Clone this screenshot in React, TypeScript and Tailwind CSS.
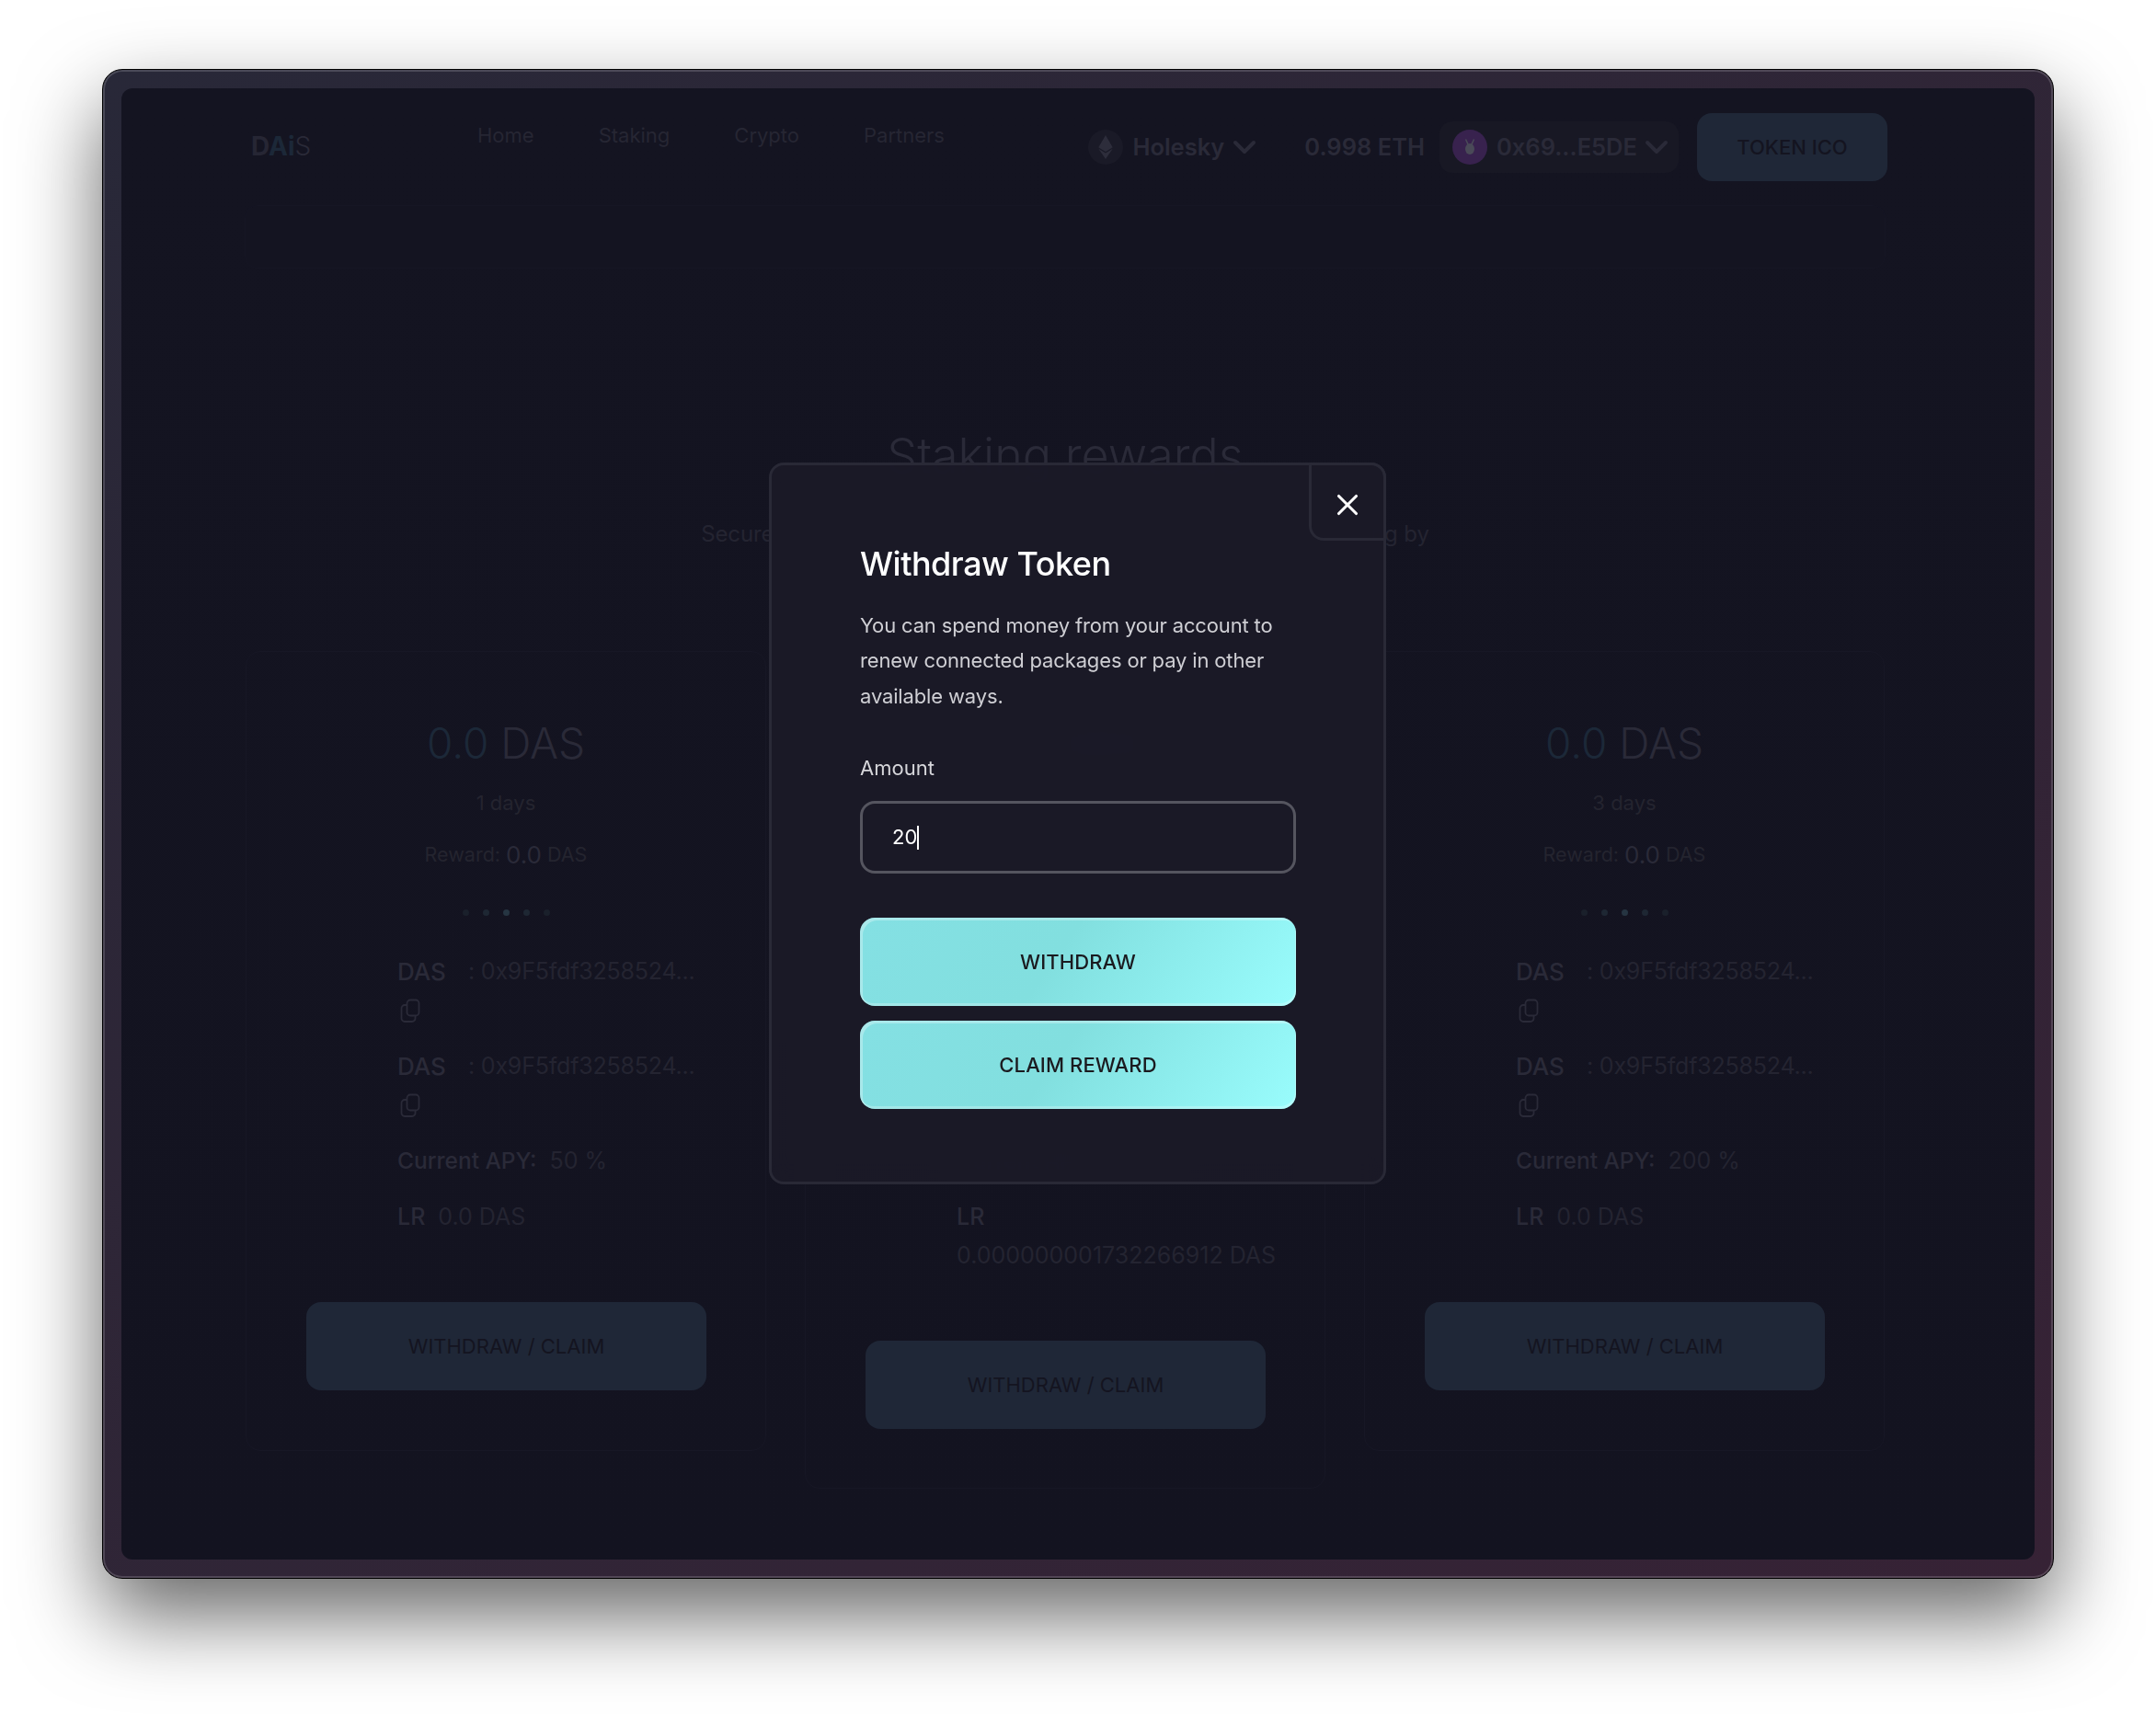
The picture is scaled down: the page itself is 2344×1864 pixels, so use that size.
import { ChevronDown, X } from 'lucide-react';
import { FaEthereum } from 'react-icons/fa';

const cards = [
  { days: '1 days', apy: '50 %', lr: '0.0 DAS', active: 2 },
  { days: '2 days', apy: '100 %', lr: '0.000000001732266912 DAS', active: 2 },
  { days: '3 days', apy: '200 %', lr: '0.0 DAS', active: 2 },
];

function CopyIcon() {
  return (
    <svg viewBox="0 0 24 26" className="mt-[11px] ml-[2px] h-[26px] w-[24px] text-[#2a2a38]" fill="none" stroke="currentColor" strokeWidth="1.8">
      <rect x="8.500" y="1.500" width="13" height="17" rx="3.500" />
      <path d="M8.500 7H6a3.500 3.500 0 0 0-3.500 3.500v11A3.500 3.500 0 0 0 6 25h8a3.500 3.500 0 0 0 3.500-3.500v-3" />
    </svg>
  );
}

function AddressRow() {
  return (
    <div className="h-[103px]">
      <div className="flex h-[37px] items-center text-[25px] tracking-[-0.2px] text-[#242431]">
        <span className="w-[77px] text-[26px] font-medium tracking-normal text-[#2a2a38]">DAS</span>
        <span className="whitespace-nowrap">: 0x9F5fdf3258524...</span>
      </div>
      <CopyIcon />
    </div>
  );
}

function StakeCard({ days, apy, lr, active, tall }: { days: string; apy: string; lr: string; active: number; tall?: boolean }) {
  return (
    <div className={`w-[566px] rounded-[16px] border border-[#171725] px-[65px] pt-[76px] ${tall ? 'h-[911px]' : 'h-[870px]'}`}>
      <div className="text-center text-[46px] leading-[46px] font-light">
        <span className="text-[#1c2838]">0.0</span> <span className="text-[#2a2a38]">DAS</span>
      </div>
      <div className="mt-[27px] text-center text-[22px] leading-[30px] text-[#24242f]">{days}</div>
      <div className="mt-[26px] flex h-[30px] items-center justify-center gap-[6px] text-[21.500px] text-[#24242f]">
        <span>Reward:</span>
        <span className="text-[26px] text-[#2a2a38]">0.0</span>
        <span>DAS</span>
      </div>
      <div className="mt-[44px] flex h-[8px] items-center justify-center gap-[15px]">
        {[0, 1, 2, 3, 4].map((i) => (
          <span
            key={i}
            className={`h-[7px] w-[7px] rounded-full ${i === active ? 'bg-[#263542]' : i === 1 || i === 3 ? 'bg-[#1e2733]' : 'bg-[#1a202b]'}`}
          />
        ))}
      </div>
      <div className="mt-[42px] -mr-[30px] pl-[99px]">
        <AddressRow />
        <AddressRow />
        <div className="flex h-[37px] items-center gap-[14px] text-[25px] text-[#242431]">
          <span className="text-[24.500px] font-medium text-[#2a2a38]">Current APY:</span>
          <span>{apy}</span>
        </div>
        <div className="mt-[24px] flex flex-wrap items-center gap-x-[14px] gap-y-[5px] text-[25px] leading-[37px] text-[#242431]">
          <span className="font-medium text-[#2a2a38]">LR</span>
          <span>{lr}</span>
        </div>
      </div>
      <button className="mt-[74px] h-[96px] w-[435px] rounded-[16px] bg-[#1f2737] text-[22px] text-[#141420]">
        WITHDRAW / CLAIM
      </button>
    </div>
  );
}

function TealButton({ label }: { label: string }) {
  return (
    <button className="h-[96px] w-[474px] rounded-[16px] bg-[linear-gradient(125deg,#84e0e3_0%,#82dfdf_45%,#9bffff_105%)] text-[22px] font-medium tracking-[0.1px] text-[#1a1a1f] shadow-[inset_3px_3px_0_rgba(255,255,255,0.3),inset_-1px_-3px_0_rgba(255,255,255,0.25)]">
      {label}
    </button>
  );
}

export default function App() {
  return (
    <div className="h-[1864px] w-[2344px] overflow-hidden bg-white pt-[75px] pl-[111px] font-['Inter',sans-serif]">
      <div className="h-[1642px] w-[2122px] rounded-[22px] border border-black bg-gradient-to-br from-[#282838] to-[#362235] p-[20px] shadow-[inset_0_0_0_2px_rgba(255,255,255,0.16),0_40px_90px_rgba(0,0,0,0.6)]">
        <div className="relative h-full w-full overflow-hidden rounded-[12px] bg-gradient-to-b from-[#141421] to-[#131320]">
          {/* Nav */}
          <div className="flex items-center pt-[27px] pr-[160px] pl-[141px]">
            <div className="-mt-[2px] w-[246px] text-[28px] leading-[32px]">
              <span className="font-bold text-[#262634]">D</span>
              <span className="font-bold text-[#1c2838]">Ai</span>
              <span className="font-light text-[#2a2a38]">S</span>
            </div>
            <div className="-mt-[26px] flex gap-[70px] text-[22px] text-[#262633]">
              <span>Home</span>
              <span>Staking</span>
              <span>Crypto</span>
              <span>Partners</span>
            </div>
            <div className="ml-auto flex items-center text-[25.500px] font-semibold text-[#2a2a38]">
              <span className="flex h-[38px] w-[38px] items-center justify-center rounded-full bg-[#1a1a27]">
                <FaEthereum className="h-[26px] w-[26px] text-[#2d2d3b]" />
              </span>
              <span className="ml-[10px]">Holesky</span>
              <ChevronDown className="ml-[2px] h-[40px] w-[40px]" strokeWidth={2.400} />
              <span className="ml-[45px]">0.998 ETH</span>
              <div className="ml-[16px] flex h-[56px] w-[260px] items-center rounded-[14px] bg-[#181824] pl-[14px]">
                <span className="flex h-[38px] w-[38px] shrink-0 items-center justify-center rounded-full bg-[#38224e]">
                  <svg viewBox="0 0 24 24" className="h-[24px] w-[24px] text-[#4a4a58]" fill="currentColor">
                    <ellipse cx="12" cy="14" rx="5" ry="6" />
                    <path d="M8 3l3 6-1.500 1L7 4zM16 3l-3 6 1.500 1L17 4z" />
                  </svg>
                </span>
                <span className="ml-[10px]">0x69...E5DE</span>
                <ChevronDown className="ml-[1px] h-[40px] w-[40px] shrink-0" strokeWidth={2.400} />
              </div>
              <button className="ml-[20px] h-[74px] w-[207px] rounded-[16px] bg-[#1f2737] text-[22px] font-medium text-[#141420]">
                TOKEN ICO
              </button>
            </div>
          </div>

          {/* Hero */}
          <div className="mt-[26px] ml-[134px] mr-[162px]">
            <div className="h-[69px] rounded-[14px] border border-[#161624] bg-[#141421]" />
            <h1 className="mt-[173px] text-center text-[52px] leading-[62px] font-light text-[#2a2a38]">Staking rewards</h1>
            <p className="mt-[36px] text-center text-[24px] leading-[36px] tracking-[-0.1px] text-[#242431]">
              Secure your digital assets and earn steady rewards through staking by
            </p>
          </div>

          {/* Cards */}
          <div className="mt-[109px] ml-[135px] flex items-start gap-[42px]">
            <StakeCard {...cards[0]} />
            <StakeCard {...cards[1]} tall />
            <StakeCard {...cards[2]} />
          </div>

          {/* Modal */}
          <div className="absolute top-[407px] left-[704px] h-[785px] w-[671px] rounded-[16px] border-[3px] border-[#292936] bg-[#1a1927]/95 pt-[85px] pl-[96px] backdrop-blur-md">
            <button className="absolute -top-[3px] -right-[3px] flex h-[85px] w-[84px] items-center justify-center rounded-tr-[16px] rounded-bl-[16px] border-[3px] border-[#292936] pt-[6px] text-white">
              <X className="h-[38px] w-[38px]" strokeWidth={2} />
            </button>
            <h2 className="text-[36px] leading-[44px] font-medium tracking-[-0.5px] text-white">Withdraw Token</h2>
            <p className="mt-[26px] w-[473px] text-[22px] leading-[38.400px] tracking-[-0.15px] text-[#cfcfd4]">
              You can spend money from your account to renew connected packages or pay in other available ways.
            </p>
            <div className="mt-[44px] text-[22px] leading-[30px] text-[#d6d6da]">Amount</div>
            <div className="mt-[21px] flex h-[79px] w-[474px] items-center rounded-[16px] border-[3px] border-[#55555f] pl-[32px] text-[22px] text-white">
              20<span className="h-[26px] w-[2px] bg-white" />
            </div>
            <div className="mt-[48px] flex flex-col gap-[16px]">
              <TealButton label="WITHDRAW" />
              <TealButton label="CLAIM REWARD" />
            </div>
          </div>
        </div>
      </div>
    </div>
  );
}
